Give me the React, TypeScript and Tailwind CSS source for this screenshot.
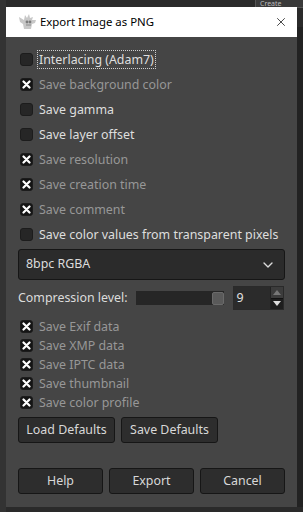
import { ChevronDown, X } from "lucide-react";

const font = { fontFamily: '"Noto Sans", "Open Sans", sans-serif' };

function Check({ checked, label, dim, focus }: { checked?: boolean; label: string; dim?: boolean; focus?: boolean }) {
  return (
    <div className="flex items-center h-[19px]">
      <div
        className={`w-[13px] h-[13px] rounded-[3px] border border-[#1c1c1c] flex items-center justify-center ${
          checked ? "bg-[#141414]" : "bg-[#262626]"
        }`}
      >
        {checked && (
          <svg width="9" height="9" viewBox="0 0 9 9">
            <path d="M1.5 1.5 L7.5 7.5 M7.5 1.5 L1.5 7.5" stroke="#fff" strokeWidth="2.2" strokeLinecap="round" />
          </svg>
        )}
      </div>
      <span
        className={`ml-[5px] text-[12.4px] leading-[17px] px-[1px] ${dim ? "text-[#979797]" : "text-[#dedede]"} ${
          focus ? "outline outline-1 outline-dotted outline-[#cfcfcf]" : ""
        }`}
      >
        {label}
      </span>
    </div>
  );
}

function Btn({ label, w }: { label: string; w: string }) {
  return (
    <button
      className={`${w} h-[26px] rounded-[3px] border border-[#161616] bg-[#2d2d2d] text-[12.4px] text-[#d8d8d8] flex items-center justify-center`}
    >
      {label}
    </button>
  );
}

export default function App() {
  const top = [
    { label: "Interlacing (Adam7)", checked: false, focus: true },
    { label: "Save background color", checked: true, dim: true },
    { label: "Save gamma", checked: false },
    { label: "Save layer offset", checked: false },
    { label: "Save resolution", checked: true, dim: true },
    { label: "Save creation time", checked: true, dim: true },
    { label: "Save comment", checked: true, dim: true },
    { label: "Save color values from transparent pixels", checked: false },
  ];
  const meta = ["Save Exif data", "Save XMP data", "Save IPTC data", "Save thumbnail", "Save color profile"];

  return (
    <div className="relative w-[303px] h-[512px] bg-[#2a2a2a] overflow-hidden" style={font}>
      {/* background window bits */}
      <div className="absolute left-0 top-0 w-[6px] h-[512px] bg-[#333333]" />
      <div className="absolute left-[255px] top-0 w-[48px] h-[8px] bg-[#3a3a3a] border-l border-b border-[#555] text-[7px] leading-[7px] text-[#bbb] pl-[4px]">
        Create
      </div>
      <div className="absolute right-0 top-[27px] w-[6px] h-[480px] bg-[#222222]" />

      <div className="relative ml-[6px] mt-[7px] w-[291px] h-[500px] bg-[#454545] flex flex-col">
        {/* title bar */}
        <div className="h-[30px] bg-white flex items-center pl-[13px] pr-[9px]">
          <svg width="18" height="16" viewBox="0 0 18 16">
            <path
              d="M0 3 L5 6 L6 1 L8 4 L10 0 L11 4 L14 3 L13 6 L17 6 L16 9 L13 10 L12 15 L5 15 L4 10 L1 8 Z"
              fill="#c8c8c8"
            />
            <circle cx="8" cy="8" r="1.4" fill="#7a7a7a" />
            <circle cx="11" cy="8" r="1.4" fill="#7a7a7a" />
            <path d="M7 11 L12 11" stroke="#8a8a8a" strokeWidth="1" />
          </svg>
          <span className="ml-[3px] text-[11.4px] text-black">Export Image as PNG</span>
          <X className="ml-auto" size={14} strokeWidth={1.3} color="#111" />
        </div>

        <div className="flex flex-col px-[12px] pt-[13px]">
          <div className="flex flex-col gap-[6px] pl-[2px]">
            {top.map((t) => (
              <Check key={t.label} {...t} />
            ))}
          </div>

          <div className="mt-[5px] h-[31px] rounded-[3px] border border-[#161616] bg-[#2b2b2b] flex items-center pl-[7px] pr-[8px]">
            <span className="text-[12.4px] text-[#dcdcdc]">8bpc RGBA</span>
            <ChevronDown className="ml-auto" size={16} strokeWidth={2} color="#dcdcdc" />
          </div>

          <div className="mt-[6px] flex items-center h-[24px]">
            <span className="text-[12.4px] text-[#dcdcdc]">Compression level:</span>
            <div className="ml-[8px] w-[88px] h-[14px] bg-[#262626] flex justify-end items-center">
              <div className="w-[12px] h-[13px] rounded-[2px] bg-[#5a5a5a] border border-[#6a6a6a]" />
            </div>
            <div className="ml-[9px] w-[51px] h-[24px] bg-[#333] border border-[#2a2a2a] flex">
              <div className="flex-1 bg-[#2b2b2b] text-[12.4px] text-[#e0e0e0] pl-[3px] leading-[22px]">9</div>
              <div className="w-[13px] flex flex-col border-l border-[#222]">
                <div className="flex-1 bg-[#3c3c3c] flex items-center justify-center">
                  <svg width="8" height="5" viewBox="0 0 8 5">
                    <path d="M0 5 L4 0 L8 5 Z" fill="#777" />
                  </svg>
                </div>
                <div className="flex-1 bg-[#1e1e1e] flex items-center justify-center border-t border-[#111]">
                  <svg width="8" height="5" viewBox="0 0 8 5">
                    <path d="M0 0 L4 5 L8 0 Z" fill="#ddd" />
                  </svg>
                </div>
              </div>
            </div>
          </div>

          <div className="mt-[7px] flex flex-col pl-[2px]">
            {meta.map((m) => (
              <Check key={m} label={m} checked dim />
            ))}
          </div>

          <div className="mt-[5px] flex gap-[6px]">
            <Btn label="Load Defaults" w="w-[97px]" />
            <Btn label="Save Defaults" w="w-[97px]" />
          </div>

          <div className="mt-[25px] flex gap-[6px]">
            <Btn label="Help" w="w-[85px]" />
            <Btn label="Export" w="w-[85px]" />
            <Btn label="Cancel" w="w-[85px]" />
          </div>
        </div>
      </div>
    </div>
  );
}
